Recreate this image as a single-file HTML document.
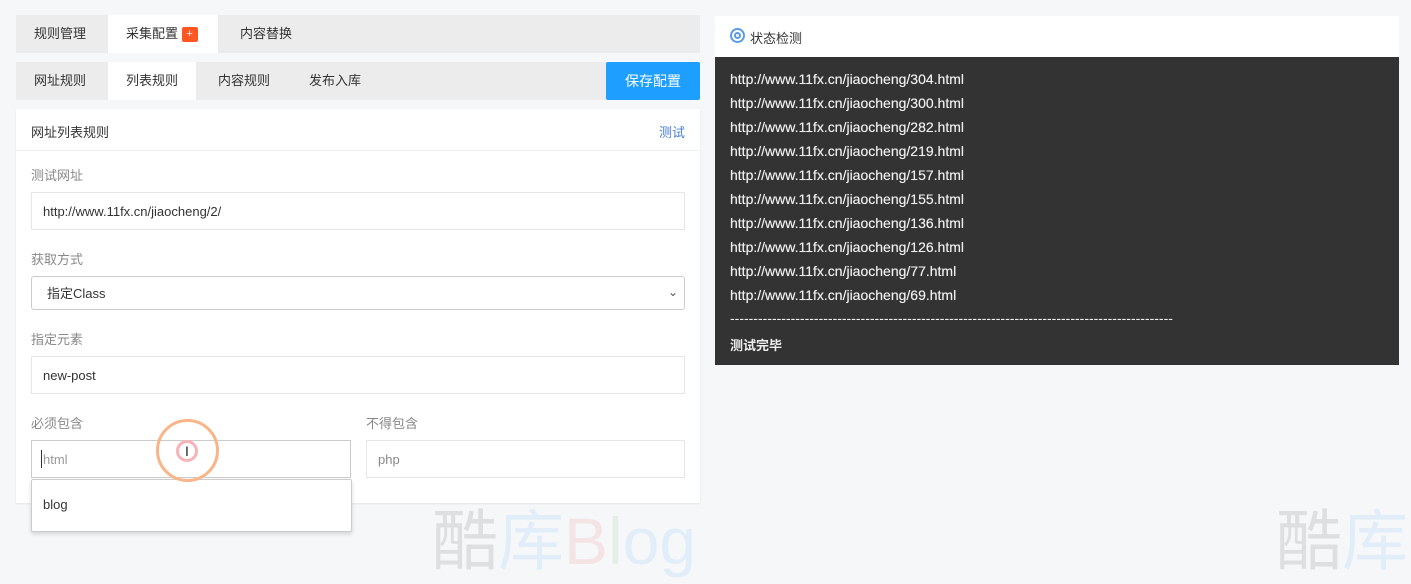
<!DOCTYPE html>
<html><head><meta charset="utf-8"><style>
*{margin:0;padding:0;box-sizing:border-box}
body{width:1411px;height:567px;background:#f6f7f9;font-family:"Liberation Sans","Noto Sans CJK SC",sans-serif;font-size:13px;color:#333;position:relative;overflow:hidden}
.a{position:absolute}
.tabs{background:#ececec}
.tab{position:absolute;top:0;height:100%;line-height:36px;font-size:13px;color:#333}
.lbl{position:absolute;left:31px;font-size:13px;color:#888}
.inp{position:absolute;background:#fff;border:1px solid #e6e6e6;font-size:13px;color:#333;padding-left:11px}
.log{position:absolute;left:730px;color:#eee;font-size:14px;font-weight:normal;text-shadow:0 0 0.4px #eee}
.wm{position:absolute;font-size:66px;opacity:.09;font-family:"Liberation Sans","Noto Sans CJK SC",sans-serif}
</style></head><body>
<div class="a tabs" style="left:16px;top:15px;width:684px;height:38px">
 <div class="tab" style="left:18px;line-height:38px">规则管理</div>
 <div class="a" style="left:92px;top:0;width:110px;height:38px;background:#fff"></div>
 <div class="tab" style="left:110px;line-height:38px">采集配置 <span style="display:inline-block;background:#ff5722;color:#fff;font-size:11px;line-height:15px;width:16px;text-align:center;border-radius:2px;vertical-align:1px">+</span></div>
 <div class="tab" style="left:224px;line-height:38px">内容替换</div>
</div>
<div class="a tabs" style="left:16px;top:62px;width:684px;height:38px">
 <div class="tab" style="left:18px;line-height:38px">网址规则</div>
 <div class="a" style="left:92px;top:0;width:88px;height:38px;background:#fff"></div>
 <div class="tab" style="left:110px;line-height:38px">列表规则</div>
 <div class="tab" style="left:202px;line-height:38px">内容规则</div>
 <div class="tab" style="left:293px;line-height:38px">发布入库</div>
</div>
<div class="a" style="left:606px;top:62px;width:94px;height:38px;background:#1e9fff;color:#fff;font-size:14px;line-height:38px;text-align:center;border-radius:2px">保存配置</div>
<div class="a" style="left:16px;top:109px;width:684px;height:394px;background:#fff;box-shadow:0 1px 2px rgba(0,0,0,.08)">
 <div class="a" style="left:0;top:0;width:684px;height:42px;border-bottom:1px solid #eee"></div>
 <div class="a" style="left:15px;top:13px;font-size:13px">网址列表规则</div>
 <div class="a" style="right:15px;top:13px;font-size:13px;color:#4a7fd0">测试</div>
</div>
<div class="lbl" style="top:165px">测试网址</div>
<div class="inp" style="left:31px;top:192px;width:654px;height:38px;line-height:38px">http://www.11fx.cn/jiaocheng/2/</div>
<div class="lbl" style="top:249px">获取方式</div>
<div class="inp" style="left:31px;top:276px;width:654px;height:34px;line-height:34px;border-color:#ccc;border-radius:3px;padding-left:15px">指定Class<span style="position:absolute;right:6px;top:-2px;font-size:12px;color:#555">&#8964;</span></div>
<div class="lbl" style="top:329px">指定元素</div>
<div class="inp" style="left:31px;top:356px;width:654px;height:38px;line-height:38px">new-post</div>
<div class="lbl" style="top:413px">必须包含</div>
<div class="lbl" style="top:413px;left:366px">不得包含</div>
<div class="inp" style="left:31px;top:440px;width:320px;height:38px;line-height:38px;border-color:#ccc;color:#999">html</div>
<div class="a" style="left:41px;top:450px;width:1px;height:18px;background:#333"></div>
<div class="inp" style="left:366px;top:440px;width:319px;height:38px;line-height:38px;color:#888">php</div>
<div class="a" style="left:31px;top:479px;width:321px;height:53px;background:#fff;border:1px solid #ccc;border-radius:2px;box-shadow:0 2px 4px rgba(0,0,0,.15);padding:17px 0 0 11px;font-size:13px">blog</div>
<div class="a" style="left:156px;top:419px;width:63px;height:63px;border:3px solid #f9b587;border-radius:50%"></div>
<div class="a" style="left:176px;top:440px;width:22px;height:22px;border:3px solid #f7b3b8;border-radius:50%"></div>
<div class="a" style="left:185px;top:443px;font-size:14px;color:#222">I</div>
<div class="a" style="left:715px;top:16px;width:684px;height:41px;background:#fff"></div>
<div class="a" style="left:730px;top:28px;width:15px;height:15px;border:2px solid #5b9be6;border-radius:50%"></div>
<div class="a" style="left:734px;top:32px;width:7px;height:7px;border:2px solid #5b9be6;border-radius:50%"></div>
<div class="a" style="left:750px;top:28px;font-size:13px">状态检测</div>
<div class="a" style="left:715px;top:57px;width:684px;height:308px;background:#333"></div>
<div class="log" style="top:71px">http://www.11fx.cn/jiaocheng/304.html</div>
<div class="log" style="top:95px">http://www.11fx.cn/jiaocheng/300.html</div>
<div class="log" style="top:119px">http://www.11fx.cn/jiaocheng/282.html</div>
<div class="log" style="top:143px">http://www.11fx.cn/jiaocheng/219.html</div>
<div class="log" style="top:167px">http://www.11fx.cn/jiaocheng/157.html</div>
<div class="log" style="top:191px">http://www.11fx.cn/jiaocheng/155.html</div>
<div class="log" style="top:215px">http://www.11fx.cn/jiaocheng/136.html</div>
<div class="log" style="top:239px">http://www.11fx.cn/jiaocheng/126.html</div>
<div class="log" style="top:263px">http://www.11fx.cn/jiaocheng/77.html</div>
<div class="log" style="top:287px">http://www.11fx.cn/jiaocheng/69.html</div>
<div class="log" style="top:310px;width:443px;overflow:hidden;white-space:nowrap;text-shadow:none">----------------------------------------------------------------------------------------------------------------------</div>
<div class="log" style="top:335px;font-size:13px;font-weight:bold;text-shadow:none">测试完毕</div>
<div class="wm" style="left:432px;top:488px"><span style="color:#000">酷</span><span style="color:#1e9fff">库</span><span style="color:#e33">B</span><span style="color:#3a3">l</span><span style="color:#1e9fff">og</span></div>
<div class="wm" style="left:1276px;top:488px"><span style="color:#000">酷</span><span style="color:#1e9fff">库</span></div>
</body></html>
